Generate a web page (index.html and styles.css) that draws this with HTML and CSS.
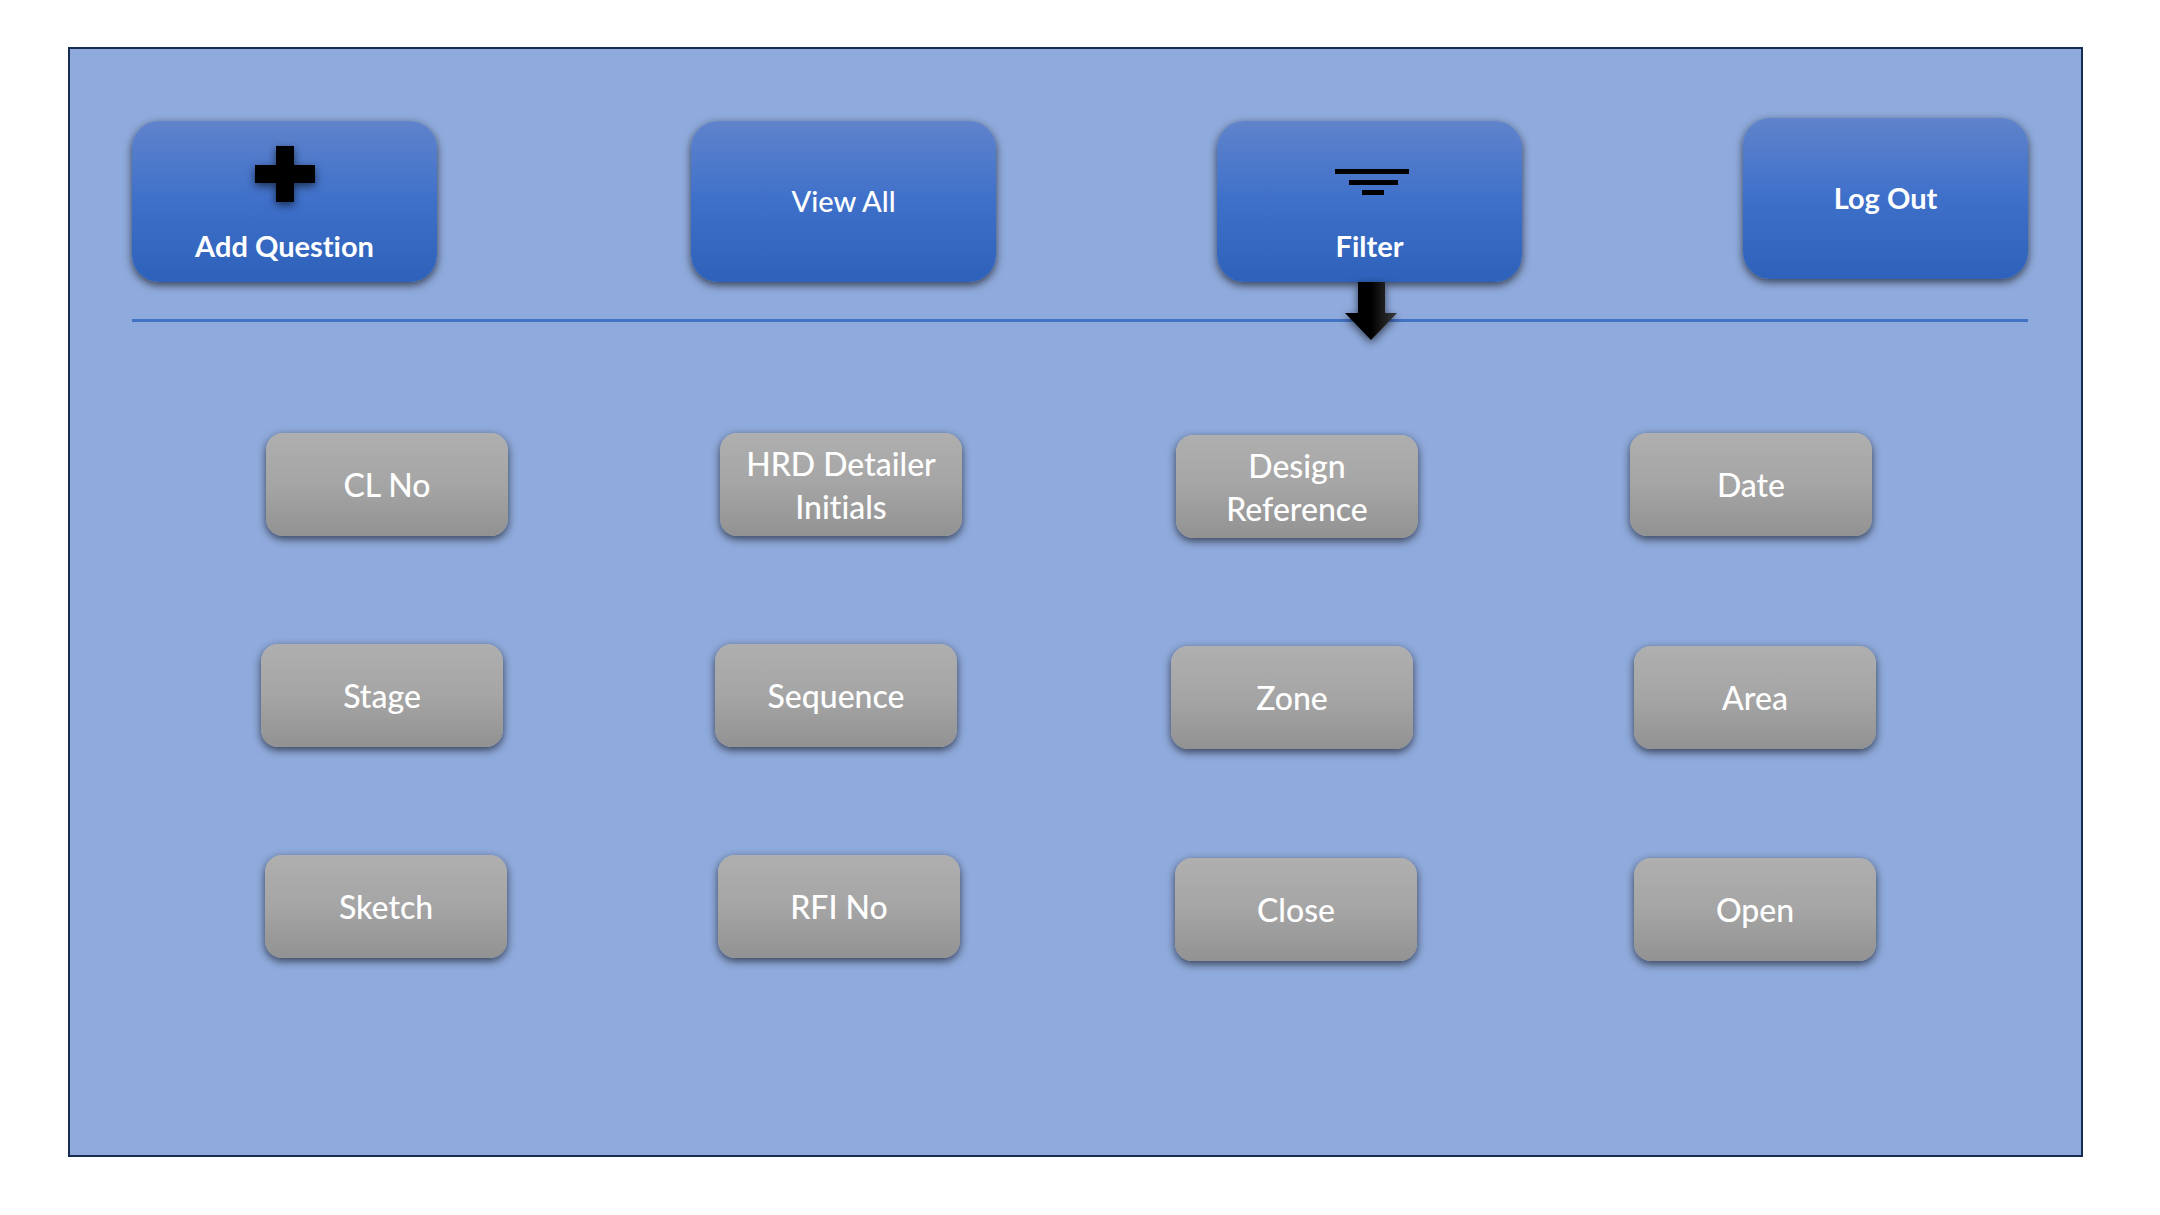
FILE: index.html
```html
<!DOCTYPE html>
<html lang="en">
<head>
  <meta charset="utf-8">
  <meta name="viewport" content="width=device-width, initial-scale=1">
  <title>Questions</title>
  <link rel="stylesheet" href="styles.css">
</head>
<body>
  <main class="panel">
    <nav class="toolbar" aria-label="Main">
      <button type="button" class="action action-icon">
        <svg class="icon icon-plus" width="60" height="56" viewBox="0 0 60 56" aria-hidden="true">
          <path d="M21 0h18v19h21v18H39v19H21V37H0V19h21z"/>
        </svg>
        <span>Add Question</span>
      </button>
      <button type="button" class="action action-light">View All</button>
      <div class="filter">
        <button type="button" class="action action-icon" aria-expanded="true">
          <svg class="icon" width="78" height="56" viewBox="0 0 78 56" aria-hidden="true">
            <path d="M4 23h74v5H4zM18 34h49v5H18zM31 44h22v5H31z"/>
          </svg>
          <span>Filter</span>
        </button>
        <svg class="arrow" width="52" height="58" viewBox="0 0 52 58" aria-hidden="true">
          <defs>
            <linearGradient id="arrow-fill">
              <stop offset="0.5" stop-color="#000"/>
              <stop offset="1" stop-color="#3a3a3a"/>
            </linearGradient>
          </defs>
          <path fill="url(#arrow-fill)" d="M13 0h27v31h12L26 58 0 31h13z"/>
        </svg>
      </div>
      <button type="button" class="action action-logout">Log Out</button>
    </nav>
    <hr class="rule">
    <section class="tiles" aria-label="Filter by">
      <div class="row row-first">
        <button type="button" class="tile">CL No</button>
        <button type="button" class="tile">HRD Detailer Initials</button>
        <button type="button" class="tile tile-low">Design Reference</button>
        <button type="button" class="tile">Date</button>
      </div>
      <div class="row row-second">
        <button type="button" class="tile">Stage</button>
        <button type="button" class="tile">Sequence</button>
        <button type="button" class="tile tile-low">Zone</button>
        <button type="button" class="tile tile-low">Area</button>
      </div>
      <div class="row row-third">
        <button type="button" class="tile">Sketch</button>
        <button type="button" class="tile">RFI No</button>
        <button type="button" class="tile tile-low">Close</button>
        <button type="button" class="tile tile-low">Open</button>
      </div>
    </section>
  </main>
</body>
</html>
```

FILE: styles.css
```css
* {
  box-sizing: border-box;
}

body {
  margin: 0;
  padding: 47px 77px 56px 68px;
  background: #fff;
  font-family: Lato, "Open Sans", sans-serif;
  font-variant-ligatures: none;
}

.panel {
  padding: 69px 53px 194px 62px;
  border: 2px solid #172c51;
  background: #8faadc;
}

button {
  border: 0;
  color: #fff;
  font-family: inherit;
  font-variant-ligatures: inherit;
  cursor: pointer;
}

/* Toolbar */
.toolbar {
  display: grid;
  grid-template-columns: 559fr 526fr 526fr 285fr;
  align-items: end;
  min-height: 164px;
}

.action {
  display: flex;
  align-items: center;
  justify-content: center;
  width: 305px;
  height: 161px;
  padding: 0 0 2px;
  border-radius: 27px;
  background: linear-gradient(#6083cb, #3e70ca 50%, #2e61ba);
  box-shadow: 0 3px 9px rgba(0, 0, 0, 0.63);
  font-size: 29px;
  font-weight: 700;
  line-height: 40px;
}

.action-icon {
  flex-direction: column;
  justify-content: flex-start;
  gap: 24px;
  padding-top: 25px;
}

.action-light {
  font-weight: 500;
}

.action-logout {
  align-self: start;
  width: 100%;
}

.icon {
  display: block;
  fill: #000;
}

.icon-plus {
  overflow: visible;
  filter: drop-shadow(0 3px 4px rgba(0, 0, 0, 0.6));
}

.filter {
  position: relative;
  width: 305px;
}

.arrow {
  position: absolute;
  top: 100%;
  left: 128px;
  overflow: visible;
  filter: drop-shadow(0 3px 4px rgba(0, 0, 0, 0.6));
}

.rule {
  height: 3px;
  margin: 37px 0 0;
  border: 0;
  background: #4472c4;
}

/* Filter tiles */
.tiles {
  display: flex;
  flex-direction: column;
  gap: 106px;
  padding-top: 111px;
}

.row {
  display: grid;
  align-items: start;
  min-height: 105px;
}

.row-first {
  grid-template-columns: 454fr 456fr 454fr 242fr;
  padding: 0 156px 0 134px;
}

.row-second {
  grid-template-columns: 454fr 456fr 463fr 242fr;
  padding: 0 152px 0 129px;
}

.row-third {
  grid-template-columns: 453fr 457fr 459fr 242fr;
  min-height: 106px;
  padding: 0 152px 0 133px;
}

.tile {
  width: 242px;
  height: 103px;
  padding: 0 16px;
  border-radius: 17px;
  background: linear-gradient(#afafaf, #a5a5a5 50%, #929292);
  box-shadow: 0 3px 9px rgba(0, 0, 0, 0.63);
  font-size: 32px;
  font-weight: 500;
  line-height: 43px;
}

.tile-low {
  align-self: end;
}
```
